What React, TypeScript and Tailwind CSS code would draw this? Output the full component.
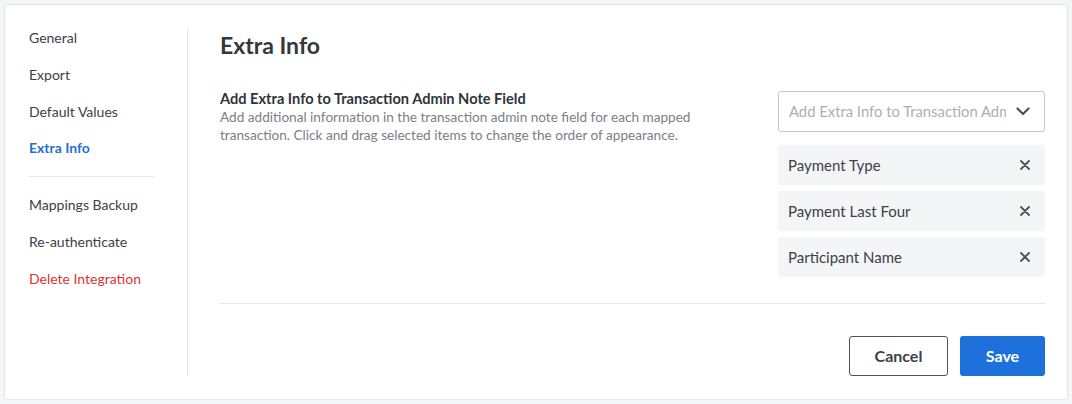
import React from "react";

const items = ["Payment Type", "Payment Last Four", "Participant Name"];

function XIcon() {
  return (
    <svg width="10" height="10" viewBox="0 0 10 10" fill="none">
      <path d="M1 1L9 9M9 1L1 9" stroke="#4b5259" strokeWidth="1.8" strokeLinecap="round" />
    </svg>
  );
}

function Chevron() {
  return (
    <svg width="14" height="9" viewBox="0 0 14 9" fill="none">
      <path d="M1.5 1.5L7 7L12.5 1.5" stroke="#4b5259" strokeWidth="2.2" strokeLinecap="round" strokeLinejoin="round" />
    </svg>
  );
}

export default function App() {
  return (
    <div
      className="w-[1072px] h-[404px] bg-[#f5f6f7] p-[4px]"
      style={{ fontFamily: "Lato, 'Open Sans', sans-serif" }}
    >
      <div className="h-[396px] bg-white border border-[#e3e5e8] rounded-[3px] flex pt-[24px]">
        <div className="w-[183px] pl-[24px] border-r border-[#e3e5e8] h-[347px] shrink-0">
          <div className="w-[125px] text-[14px] text-[#3c4147] -mt-[10px]">
            <div className="h-[37px] flex items-center">General</div>
            <div className="h-[37px] flex items-center">Export</div>
            <div className="h-[36px] flex items-center">Default Values</div>
            <div className="h-[37px] flex items-center font-bold text-[#1f6fd6]">Extra Info</div>
            <div className="h-[20px] flex items-center">
              <div className="w-full border-t border-[#e3e5e8]" />
            </div>
            <div className="h-[37px] flex items-center">Mappings Backup</div>
            <div className="h-[37px] flex items-center">Re-authenticate</div>
            <div className="h-[37px] flex items-center text-[#d9362f]">Delete Integration</div>
          </div>
        </div>
        <div className="flex-1 pl-[32px] pr-[22px] flex flex-col">
          <h1 className="text-[23px] font-bold text-[#33383e] leading-[28px] mt-[2px]">Extra Info</h1>
          <div className="flex justify-between mt-[31px]">
            <div className="w-[520px]">
              <div className="text-[14.6px] font-bold text-[#2f3439] leading-[18px]">
                Add Extra Info to Transaction Admin Note Field
              </div>
              <div className="text-[13.6px] text-[#7a8087] leading-[18px] w-[490px]">
                Add additional information in the transaction admin note field for each mapped transaction. Click and drag selected items to change the order of appearance.
              </div>
            </div>
            <div className="w-[267px] mt-[1px]">
              <div className="h-[41px] border border-[#c3c7cc] rounded-[3px] flex items-center pl-[10px] pr-[14px]">
                <div className="flex-1 overflow-hidden whitespace-nowrap text-[14.8px] text-[#aab0b6]">
                  Add Extra Info to Transaction Admin Note Field
                </div>
                <div className="ml-[10px]"><Chevron /></div>
              </div>
              <div className="mt-[13px] flex flex-col gap-[6px]">
                {items.map((t) => (
                  <div key={t} className="h-[40px] bg-[#f4f5f7] rounded-[3px] flex items-center justify-between pl-[10px] pr-[15px] text-[15px] text-[#3c4147]">
                    <span>{t}</span>
                    <XIcon />
                  </div>
                ))}
              </div>
            </div>
          </div>
          <div className="mt-[26px] border-t border-[#e3e5e8]" />
          <div className="flex justify-end gap-[12px] mt-[32px]">
            <button className="w-[99px] h-[40px] border border-[#4b5259] rounded-[3px] text-[16px] font-bold text-[#3c4147]">Cancel</button>
            <button className="w-[85px] h-[40px] bg-[#1e71db] rounded-[3px] text-[16px] font-bold text-white">Save</button>
          </div>
        </div>
      </div>
    </div>
  );
}
